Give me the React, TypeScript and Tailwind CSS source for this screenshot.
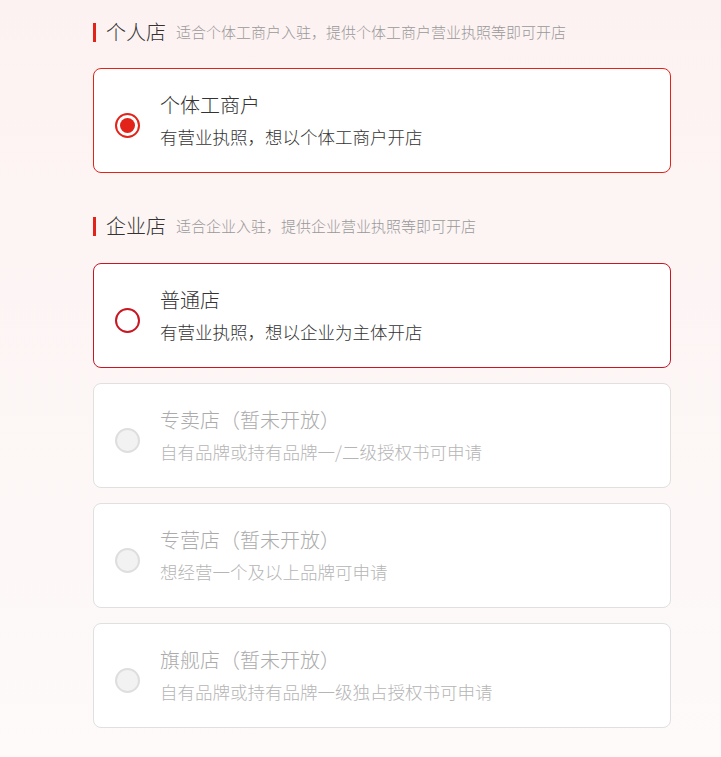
import React from "react"

type Shop = {
  title: string
  desc: string
  state: "checked" | "open" | "disabled"
}

const personal: Shop[] = [
  { title: "个体工商户", desc: "有营业执照，想以个体工商户开店", state: "checked" },
]

const company: Shop[] = [
  { title: "普通店", desc: "有营业执照，想以企业为主体开店", state: "open" },
  { title: "专卖店（暂未开放）", desc: "自有品牌或持有品牌一/二级授权书可申请", state: "disabled" },
  { title: "专营店（暂未开放）", desc: "想经营一个及以上品牌可申请", state: "disabled" },
  { title: "旗舰店（暂未开放）", desc: "自有品牌或持有品牌一级独占授权书可申请", state: "disabled" },
]

function Radio({ state }: { state: Shop["state"] }) {
  if (state === "checked") {
    return (
      <div className="mt-[9px] flex h-[25px] w-[25px] shrink-0 items-center justify-center rounded-full border-2 border-[#e2231a] bg-white">
        <div className="h-[15px] w-[15px] rounded-full bg-[#e2231a]" />
      </div>
    )
  }
  if (state === "open") {
    return <div className="mt-[9px] h-[25px] w-[25px] shrink-0 rounded-full border-2 border-[#c81623] bg-white" />
  }
  return <div className="mt-[9px] h-[25px] w-[25px] shrink-0 rounded-full border-2 border-[#dedede] bg-[#f2f2f2]" />
}

function ShopCard({ shop }: { shop: Shop }) {
  const border =
    shop.state === "checked"
      ? "border-[#e2231a]"
      : shop.state === "open"
        ? "border-[#c81623]"
        : "border-[#e0e0e0]"
  const disabled = shop.state === "disabled"
  return (
    <div className={`flex h-[105px] w-[578px] items-center rounded-[8px] border bg-white pl-[21px] ${border}`}>
      <Radio state={shop.state} />
      <div className="ml-[20px] flex flex-col">
        <div className={`text-[20px] leading-[26px] ${disabled ? "text-[#ababab]" : "text-[#333333]"}`}>{shop.title}</div>
        <div className={`mt-[7px] text-[17.5px] leading-[24px] ${disabled ? "text-[#b5b5b5]" : "text-[#333333]"}`}>{shop.desc}</div>
      </div>
    </div>
  )
}

function SectionTitle({ title, hint }: { title: string; hint: string }) {
  return (
    <div className="flex h-[20px] items-center">
      <div className="h-[19px] w-[3px] bg-[#e2231a]" />
      <div className="ml-[10px] text-[20px] leading-[20px] text-[#333333]">{title}</div>
      <div className="ml-[10px] text-[15px] leading-[20px] text-[#999999]">{hint}</div>
    </div>
  )
}

export default function App() {
  return (
    <div
      className="min-h-[757px] bg-gradient-to-b from-[#fdf2f2] to-[#fdfaf9] pl-[93px] pt-[22px] font-light"
      style={{ fontFamily: '"Noto Sans CJK SC", "Noto Sans", sans-serif' }}
    >
      <SectionTitle title="个人店" hint="适合个体工商户入驻，提供个体工商户营业执照等即可开店" />
      <div className="mt-[26px] flex flex-col gap-[16px]">
        {personal.map((s) => (
          <ShopCard key={s.title} shop={s} />
        ))}
      </div>

      <div className="mt-[43px]">
        <SectionTitle title="企业店" hint="适合企业入驻，提供企业营业执照等即可开店" />
      </div>
      <div className="mt-[27px] flex flex-col gap-[15px]">
        {company.map((s) => (
          <ShopCard key={s.title} shop={s} />
        ))}
      </div>
    </div>
  )
}
